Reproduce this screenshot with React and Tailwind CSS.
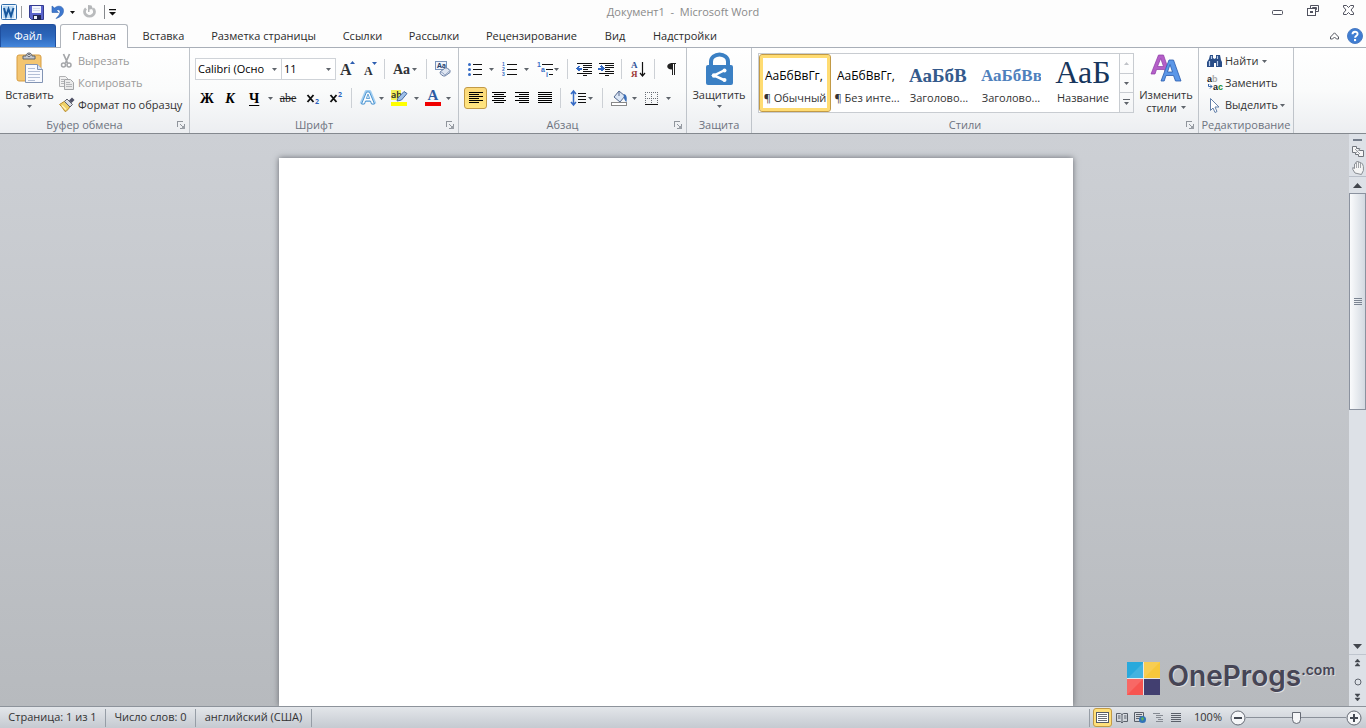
import React, { useState } from "react";
import clsx from "clsx";

const tabs = [
  { name: "Вставка", width: "w-[71px]" },
  { name: "Разметка страницы", width: "w-[129px]" },
  { name: "Ссылки", width: "w-[69px]" },
  { name: "Рассылки", width: "w-[74px]" },
  { name: "Рецензирование", width: "w-[121px]" },
  { name: "Вид", width: "w-[46px]" },
  { name: "Надстройки", width: "w-[94px]" },
];

const styles = [
  { name: "¶ Обычный", sample: "АаБбВвГг,", look: "font-['Open_Sans',sans-serif] text-[12px] text-black" },
  { name: "¶ Без инте...", sample: "АаБбВвГг,", look: "font-['Open_Sans',sans-serif] text-[12px] text-black" },
  { name: "Заголово...", sample: "АаБбВ", look: "font-['Liberation_Serif',serif] text-[19px] font-bold text-[#345a8c]" },
  { name: "Заголово...", sample: "АаБбВв", look: "font-['Liberation_Serif',serif] text-[17px] font-bold text-[#4f81bd]" },
  { name: "Название", sample: "АаБ", look: "font-['Liberation_Serif',serif] text-[32px] text-[#17365d]" },
];

function Arrow({ className = "" }) {
  return (
    <svg width="5" height="3" viewBox="0 0 5 3" className={clsx("shrink-0", className)} aria-hidden="true">
      <path d="M0 0h5L2.500 3z" fill="#5f646b" />
    </svg>
  );
}

function Icon({ w = 16, h = 16, crisp, children }) {
  return (
    <svg
      width={w}
      height={h}
      viewBox={`0 0 ${w} ${h}`}
      fill="none"
      className="shrink-0 overflow-visible"
      shapeRendering={crisp ? "crispEdges" : "auto"}
      aria-hidden="true"
    >
      {children}
    </svg>
  );
}

function Tool({ label, className = "", children }) {
  return (
    <button type="button" aria-label={label} className={clsx("flex h-6 shrink-0 items-center justify-center", className)}>
      {children}
    </button>
  );
}

function DropTool({ label, className = "", children }) {
  return (
    <button type="button" aria-label={label} className={clsx("flex h-6 shrink-0 items-center justify-between", className)}>
      {children}
      <Arrow />
    </button>
  );
}

function Divider({ className = "" }) {
  return <span className={clsx("h-5 w-px shrink-0 bg-[#ccd0d5]", className)} />;
}

function Group({ title, launcher, className = "", children }) {
  return (
    <section className={clsx("flex shrink-0 flex-col border-r border-[#bfc4ca]", className)}>
      <div className="flex-1">{children}</div>
      <div className="flex h-4 items-center">
        <h2 className="flex-1 text-center whitespace-nowrap text-[#6d7380]">{title}</h2>
        {launcher && (
          <button type="button" aria-label={`${title}: параметры`} className="flex w-5 justify-end pr-1">
            <Icon w={8} h={8} crisp>
              <path d="M0.500 6V0.500H6" stroke="#90959c" />
              <path d="M3 3l3 3" stroke="#90959c" />
              <path d="M7.500 3v4.500H3" stroke="#90959c" />
              <rect x="5" y="5" width="3" height="3" fill="#9a9fa6" />
            </Icon>
          </button>
        )}
      </div>
    </section>
  );
}

function Combo({ label, options, value, onChange, className = "" }) {
  return (
    <label className={clsx("relative flex h-[22px] items-center border border-[#cfd3d8] bg-white", className)}>
      <select
        aria-label={label}
        value={value}
        onChange={(event) => onChange(event.target.value)}
        className="h-full w-full appearance-none overflow-hidden bg-transparent pr-3 pl-0.5 text-[11px] text-black outline-none"
      >
        {options.map((option) => (
          <option key={option}>{option}</option>
        ))}
      </select>
      <Arrow className="pointer-events-none absolute right-1" />
    </label>
  );
}

function Lines({ rows }) {
  return (
    <Icon w={14} h={12} crisp>
      {rows.map(([x, width], i) => (
        <rect key={i} x={x} y={i * 2} width={width} height="1" fill="#000" />
      ))}
    </Icon>
  );
}

const alignments = [
  { label: "По левому краю", rows: [[0, 14], [0, 10], [0, 14], [0, 10], [0, 14], [0, 10]] },
  { label: "По центру", rows: [[0, 14], [2, 10], [0, 14], [2, 10], [0, 14], [2, 10]] },
  { label: "По правому краю", rows: [[0, 14], [4, 10], [0, 14], [4, 10], [0, 14], [4, 10]] },
  { label: "По ширине", rows: [[0, 14], [0, 14], [0, 14], [0, 14], [0, 14], [0, 14]] },
];

function TitleBar() {
  return (
    <header className="grid h-6 grid-cols-[1fr_auto_1fr] items-center">
      <div className="flex items-center">
        <button type="button" aria-label="Word" className="ml-px">
          <Icon>
            <rect x="0.500" y="0.500" width="15" height="15" rx="1" fill="#eef6fd" stroke="#2f6cab" />
            <rect x="2" y="2" width="11" height="12" fill="#b9d8f2" />
            <path d="M3 4l2 8 2.500-7L10 12l2.500-8" stroke="#17579d" strokeWidth="2" />
          </Icon>
        </button>
        <span className="ml-1 h-3 w-px bg-[#9b9da0]" />
        <button type="button" aria-label="Сохранить" className="ml-[7px]">
          <Icon w={15} h={15}>
            <path d="M0.500 0.500h14v14h-12l-2-2z" fill="#5a64cb" stroke="#343b8f" />
            <rect x="3" y="1" width="9" height="7" fill="#f4f6fd" />
            <path d="M4 3.500h7M4 5.500h7" stroke="#d5daea" />
            <rect x="4" y="10" width="8" height="5" fill="#20264f" />
            <rect x="5" y="11" width="3" height="3" fill="#eef1fb" />
          </Icon>
        </button>
        <button type="button" aria-label="Отменить" className="ml-2 flex items-center gap-1.5">
          <Icon w={12} h={14}>
            <path d="M0 1v6.500h6.500L4.500 5.500C6.500 4 8.500 5 8 7.500 7.500 10 6 11.500 4 13.500c5-1.500 7.500-4 7.500-8C11.500 1.500 6.500-.5 2.500 3z" fill="#3e78cf" stroke="#2c5fae" strokeWidth=".6" />
          </Icon>
          <svg width="5" height="3" viewBox="0 0 5 3" aria-hidden="true">
            <path d="M0 0h5L2.500 3z" fill="#111" />
          </svg>
        </button>
        <button type="button" aria-label="Повторить" className="ml-2">
          <Icon w={13} h={14}>
            <path d="M3 3.500a5 4.500 0 1 0 7 0" stroke="#b9bbbd" strokeWidth="2.800" />
            <path d="M5 0v7h1.500V4.500L10 4 8.500.500z" fill="#b4b6b8" />
          </Icon>
        </button>
        <span className="ml-2 h-3.5 w-px bg-[#85888c]" />
        <button type="button" aria-label="Настройка панели" className="ml-1">
          <Icon w={7} h={7}>
            <path d="M0 0h7v1.300H0zM0 3h7L3.500 6.500z" fill="#111" />
          </Icon>
        </button>
      </div>
      <h1 className="text-[11px] whitespace-pre text-[#8a8a8a]">Документ1  -  Microsoft Word</h1>
      <div className="flex items-center justify-end gap-6 pr-3">
        <button type="button" aria-label="Свернуть">
          <Icon w={11} h={5}>
            <rect x="0.500" y="0.500" width="10" height="4" rx="1" fill="#fff" stroke="#50525f" />
          </Icon>
        </button>
        <button type="button" aria-label="Свернуть в окно" className="pb-1">
          <Icon w={12} h={11}>
            <path d="M3.500 3V.5h8v6H9" stroke="#50525f" />
            <path d="M5.500 3.500v-1h4v2H9" stroke="#50525f" />
            <rect x="0.500" y="3.500" width="8" height="7" stroke="#50525f" fill="#fff" />
            <rect x="3.500" y="6.500" width="2" height="1" stroke="#50525f" />
          </Icon>
        </button>
        <button type="button" aria-label="Закрыть" className="pb-1">
          <Icon w={11} h={10}>
            <path d="M.5.500h3l2 2 2-2h3v1.500L8 5l2.500 3v1.500h-3l-2-2-2 2h-3V8L3 5 .5 2z" fill="#fff" stroke="#50525f" />
          </Icon>
        </button>
      </div>
    </header>
  );
}

function TabRow() {
  return (
    <nav className="flex h-6 items-stretch border-b border-[#a9afb8] text-[#2b2b2b]">
      <button type="button" className="w-14 rounded-t-[3px] border border-b-0 border-[#1f4f9f] bg-linear-to-b from-[#2558a8] via-[#2c66ba] to-[#4386dc] text-white">
        Файл
      </button>
      <button type="button" className="z-10 -mb-px ml-1 w-[68px] rounded-t-[3px] border border-b-0 border-[#b0b5bc] bg-white">
        Главная
      </button>
      <div className="flex flex-1 pt-px">
        {tabs.map((tab) => (
          <button key={tab.name} type="button" className={clsx("shrink-0 whitespace-nowrap", tab.width)}>
            {tab.name}
          </button>
        ))}
      </div>
      <div className="flex items-center gap-2 pr-[3px]">
        <button type="button" aria-label="Свернуть ленту">
          <Icon w={9} h={8}>
            <path d="M.5 5L4.500.800 8.500 5v2H6.500l-2-2-2 2H.5z" fill="#fff" stroke="#555861" />
          </Icon>
        </button>
        <button type="button" aria-label="Справка">
          <Icon>
            <circle cx="8" cy="8" r="7.500" fill="#3f7dd2" stroke="#4b7cc4" />
            <path d="M5.500 6.200C5.500 3 10.600 3 10.600 6c0 1.700-2.500 1.700-2.500 3.700" stroke="#fff" strokeWidth="1.900" />
            <rect x="7" y="11" width="2.100" height="2.100" fill="#fff" />
          </Icon>
        </button>
      </div>
    </nav>
  );
}

function ClipboardGroup() {
  return (
    <Group title="Буфер обмена" launcher className="w-[190px]">
      <div className="flex">
        <button type="button" className="flex w-[59px] flex-col items-center pt-1">
          <Icon w={28} h={32}>
            <rect x="1" y="3" width="24" height="26" rx="2" fill="#f3c571" stroke="#d79d42" />
            <path d="M7 7V4h3c0-4 6-4 6 0h3v3z" fill="#c5c9d0" stroke="#5f646d" />
            <circle cx="13" cy="3.500" r="1.200" fill="#fff" stroke="#5f646d" />
            <path d="M9.500 12.500h12l5 5v13h-17z" fill="#f8faff" stroke="#8294b4" />
            <path d="M21.500 12.500v5h5" fill="#dbe5f6" stroke="#8294b4" />
            <path d="M12 16.500h7M12 19.500h12M12 22.500h12M12 25.500h12M12 28.500h7" stroke="#b3bfd6" />
          </Icon>
          <span className="mt-[3px] leading-4">Вставить</span>
          <Arrow className="mt-0.5" />
        </button>
        <div className="flex flex-col items-start pt-0.5 leading-[22px] whitespace-nowrap">
          <button type="button" className="flex items-center gap-[3px] text-[#9a9a9a]">
            <Icon>
              <path d="M4.500 1l4 9M10.500 1l-4 9" stroke="#a4a6a9" strokeWidth="1.700" />
              <circle cx="4.500" cy="12" r="2" stroke="#a4a6a9" strokeWidth="1.500" />
              <circle cx="10" cy="12" r="2" stroke="#a4a6a9" strokeWidth="1.500" />
            </Icon>
            Вырезать
          </button>
          <button type="button" className="flex items-center gap-[3px] text-[#9a9a9a]">
            <Icon>
              <path d="M.5 1.500h6l3 3v7h-9z" fill="#f1f1f1" stroke="#b0b1b3" />
              <path d="M5.500 4.500h6l3 3v7h-9z" fill="#eaeaea" stroke="#a3a5a8" />
              <path d="M2 4.500h3M2 6.500h3M2 8.500h3M7 7.500h4M7 9.500h6M7 11.500h6" stroke="#b4b6b9" />
            </Icon>
            Копировать
          </button>
          <button type="button" className="flex items-center gap-[3px]">
            <Icon>
              <path d="M.5 7.500L6 4l5 5c-1 3-3 5-5 5.500-1.500-2-3-5-5.500-7z" fill="#efd168" stroke="#b88b2b" />
              <path d="M5.500 4.500L8 2l5.500 5.500L11 10z" fill="#d9dce5" stroke="#60636e" />
              <path d="M10 3.500L13 .500l2.500 2.500-3 3z" fill="#4f5165" />
              <path d="M3 8.500l4 4" stroke="#fff4bd" strokeWidth="1.500" />
            </Icon>
            Формат по образцу
          </button>
        </div>
      </div>
    </Group>
  );
}

function FontGroup() {
  const [font, setFont] = useState("Calibri (Осно");
  const [size, setSize] = useState("11");

  return (
    <Group title="Шрифт" launcher className="w-[269px]">
      <div className="flex flex-col gap-[5px] pt-[9px] pl-[5px]">
        <div className="flex h-6 items-center">
          <Combo label="Шрифт" value={font} onChange={setFont} options={["Calibri (Осно", "Arial", "Times"]} className="w-[87px]" />
          <Combo label="Размер" value={size} onChange={setSize} options={["8", "11", "12", "14"]} className="-ml-px w-[55px]" />
          <Tool label="Увеличить размер" className="w-6">
            <Icon w={16} h={16}>
              <text x="0" y="14" fontFamily="Liberation Serif, serif" fontWeight="700" fontSize="16" fill="#2f3236">A</text>
              <path d="M10 3h5l-2.500-3z" fill="#2c5db0" />
            </Icon>
          </Tool>
          <Tool label="Уменьшить размер" className="w-5">
            <Icon w={14} h={16}>
              <text x="1" y="14" fontFamily="Liberation Serif, serif" fontWeight="700" fontSize="12" fill="#2f3236">A</text>
              <path d="M9 1h5l-2.500 3z" fill="#2c5db0" />
            </Icon>
          </Tool>
          <Divider className="mx-1" />
          <DropTool label="Регистр" className="mx-1 w-6">
            <span className="font-['Liberation_Serif',serif] text-[14px] font-bold text-[#2f3236]">Aa</span>
          </DropTool>
          <Divider className="ml-[5px]" />
          <Tool label="Очистить формат" className="ml-1.5 w-[18px]">
            <Icon w={17} h={16}>
              <rect x="1.500" y="0.500" width="11" height="8" fill="#eff4fb" stroke="#7a93bb" />
              <text x="3" y="7" fontFamily="Open Sans, sans-serif" fontWeight="700" fontSize="7" fill="#27406d">Aa</text>
              <path d="M6 11l5-4c1-.7 4 1 5 2.500v2L11 15c-2 .5-5-1.500-5-4z" fill="#dfe6f2" stroke="#697ea3" />
              <path d="M6 11c2 0 4 1.500 5 3.500M11 14l5-4.500" stroke="#94a5c3" />
            </Icon>
          </Tool>
        </div>
        <div className="flex h-6 items-center">
          <Tool label="Полужирный" className="w-6">
            <span className="font-['Liberation_Serif',serif] text-[14px] font-bold text-black">Ж</span>
          </Tool>
          <Tool label="Курсив" className="w-[22px]">
            <span className="font-['Liberation_Serif',serif] text-[14px] font-bold text-black italic">К</span>
          </Tool>
          <DropTool label="Подчеркнутый" className="ml-2 w-6">
            <span className="font-['Liberation_Serif',serif] text-[14px] font-bold text-black underline underline-offset-2">Ч</span>
          </DropTool>
          <Tool label="Зачеркнутый" className="ml-1 w-[22px]">
            <span className="font-['Liberation_Serif',serif] text-[12px] text-[#222] line-through">abe</span>
          </Tool>
          <Tool label="Подстрочный" className="ml-0.5 w-6">
            <Icon w={14} h={14}>
              <path d="M1.500 4l6 7M7.500 4l-6 7" stroke="#111" strokeWidth="1.900" />
              <text x="9" y="13" fontFamily="Open Sans, sans-serif" fontWeight="700" fontSize="7" fill="#2c62bd">2</text>
            </Icon>
          </Tool>
          <Tool label="Надстрочный" className="w-[22px]">
            <Icon w={14} h={14}>
              <path d="M1.500 4l6 7M7.500 4l-6 7" stroke="#111" strokeWidth="1.900" />
              <text x="9" y="6" fontFamily="Open Sans, sans-serif" fontWeight="700" fontSize="7" fill="#2c62bd">2</text>
            </Icon>
          </Tool>
          <Divider className="mx-1" />
          <DropTool label="Текстовые эффекты" className="ml-1 w-6">
            <Icon w={16} h={18}>
              <path d="M1.500 15L6.500 3h3l5 12M4 11h8" stroke="#a3cff2" strokeWidth="4" strokeLinejoin="round" />
              <path d="M1.500 15L6.500 3h3l5 12h-3l-1-3h-5l-1 3z" fill="#fff" stroke="#4b93cf" />
              <path d="M6.300 9.500L8 5l1.700 4.500z" fill="#d5ecfc" stroke="#4b93cf" strokeWidth=".8" />
            </Icon>
          </DropTool>
          <DropTool label="Цвет выделения" className="ml-[7px] w-7">
            <Icon w={17} h={18}>
              <rect x="0" y="1" width="10" height="10" fill="#f2ef59" />
              <text x="0" y="9" fontFamily="Open Sans, sans-serif" fontWeight="600" fontSize="9" fill="#222">ab</text>
              <path d="M7 9l6-6.500 3 2L10.500 11 6 12z" fill="#9fc0e8" stroke="#456ca4" />
              <rect x="0" y="13" width="16" height="4" fill="#ffff00" />
            </Icon>
          </DropTool>
          <DropTool label="Цвет текста" className="ml-1.5 w-[26px]">
            <Icon w={16} h={18}>
              <text x="2.500" y="11" fontFamily="Liberation Serif, serif" fontWeight="700" fontSize="15" fill="#2d5ba3">A</text>
              <rect x="0" y="13" width="16" height="4" fill="#f00000" />
            </Icon>
          </DropTool>
        </div>
      </div>
    </Group>
  );
}

function ParagraphGroup() {
  const [align, setAlign] = useState(0);

  return (
    <Group title="Абзац" launcher className="w-[228px]">
      <div className="flex flex-col gap-[5px] pt-[9px] pl-[5px]">
        <div className="flex h-6 items-center">
          <DropTool label="Маркеры" className="ml-1 w-[26px]">
            <Icon w={15} h={14}>
              <circle cx="1.500" cy="2.500" r="1.500" fill="#356bc5" />
              <circle cx="1.500" cy="7.500" r="1.500" fill="#356bc5" />
              <circle cx="1.500" cy="12.500" r="1.500" fill="#356bc5" />
              <path d="M5 2.500h9M5 7.500h9M5 12.500h9" stroke="#111" />
            </Icon>
          </DropTool>
          <DropTool label="Нумерация" className="ml-2 w-[27px]">
            <Icon w={16} h={14}>
              <g fontFamily="Liberation Sans, sans-serif" fontWeight="700" fontSize="5" fill="#356bc5">
                <text x="0" y="4">1</text>
                <text x="0" y="9">2</text>
                <text x="0" y="14">3</text>
              </g>
              <path d="M5 2.500h10M5 7.500h10M5 12.500h10" stroke="#111" />
            </Icon>
          </DropTool>
          <DropTool label="Многоуровневый список" className="ml-2 w-[22px]">
            <Icon w={17} h={15}>
              <g fontFamily="Liberation Sans, sans-serif" fontWeight="700" fontSize="7" fill="#356bc5">
                <text x="0" y="5">1</text>
                <text x="4" y="10">a</text>
                <text x="9" y="15">i</text>
              </g>
              <path d="M5 2.500h11M9 7.500h7M12 12.500h4" stroke="#111" />
            </Icon>
          </DropTool>
          <Divider className="mr-[5px] ml-2" />
          <Tool label="Уменьшить отступ" className="w-[22px]">
            <Icon w={16} h={14} crisp>
              <path d="M1 1.500h15M7 3.500h9M7 5.500h9M7 7.500h5M7 9.500h9M1 11.500h15M7 13.500h4" stroke="#111" />
              <path d="M6 6.500H1M3.500 4L1 6.500 3.500 9" stroke="#356bc5" strokeWidth="2" />
            </Icon>
          </Tool>
          <Tool label="Увеличить отступ" className="w-[22px]">
            <Icon w={16} h={14} crisp>
              <path d="M1 1.500h15M7 3.500h9M7 5.500h9M7 7.500h5M7 9.500h9M1 11.500h15M7 13.500h4" stroke="#111" />
              <path d="M0 6.500h5M3 4l2.500 2.500L3 9" stroke="#356bc5" strokeWidth="2" />
            </Icon>
          </Tool>
          <Divider className="mx-1" />
          <Tool label="Сортировка" className="w-6">
            <Icon w={15} h={17}>
              <g fontFamily="Liberation Serif, serif" fontWeight="700" fontSize="9">
                <text x="0" y="7" fill="#2d5298">А</text>
                <text x="0" y="16" fill="#9c3636">Я</text>
              </g>
              <path d="M11.500 1v13M9 12l2.500 3 2.500-3" stroke="#111" strokeWidth="1.200" />
            </Icon>
          </Tool>
          <Divider className="mx-1" />
          <Tool label="Отобразить все знаки" className="w-6">
            <Icon w={10} h={12}>
              <path d="M5 .5h5M6.500.5v11.500M8.500.5v11.500" stroke="#222" />
              <path d="M6.500 0v6.500C-.5 7-.5 0 6.500 0z" fill="#222" />
            </Icon>
          </Tool>
        </div>
        <div className="flex h-6 items-center">
          {alignments.map((item, index) => (
            <button
              key={item.label}
              type="button"
              aria-label={item.label}
              aria-pressed={align === index}
              onClick={() => setAlign(index)}
              className={clsx(
                "flex h-[22px] w-[23px] shrink-0 items-center justify-center rounded-[3px] border",
                align === index ? "border-[#c29a46] bg-linear-to-b from-[#fbd97a] to-[#ffe57f]" : "border-transparent",
              )}
            >
              <Lines rows={item.rows} />
            </button>
          ))}
          <Divider className="mx-1" />
          <DropTool label="Интервал" className="ml-[5px] w-[23px]">
            <Icon w={16} h={16}>
              <path d="M3.500 1v14M1 4l2.500-3L6 4M1 12l2.500 3L6 12" stroke="#356bc5" strokeWidth="1.500" />
              <path d="M8 3.500h8M8 6.500h8M8 9.500h8M8 12.500h8" stroke="#111" />
            </Icon>
          </DropTool>
          <Divider className="ml-[9px]" />
          <DropTool label="Заливка" className="ml-2 w-[26px]">
            <Icon w={17} h={16}>
              <path d="M3 7l5-6 6 5-5 6z" fill="#dbe6f5" stroke="#54698f" />
              <path d="M8 6V1" stroke="#54698f" />
              <path d="M13 4c3 1 3 4 2.500 8-1.500-1-3.500-4-2.500-8z" fill="#3c6fb9" />
              <rect x="0.500" y="12.500" width="15" height="3" fill="#fff" stroke="#888" />
            </Icon>
          </DropTool>
          <DropTool label="Границы" className="ml-2 w-[26px]">
            <Icon w={13} h={13} crisp>
              <path d="M0 .5h13M0 6.500h13M.5 0v12M6.500 0v12M12.500 0v12" stroke="#6a6f76" strokeDasharray="1 1" />
              <path d="M0 12.500h13" stroke="#111" />
            </Icon>
          </DropTool>
        </div>
      </div>
    </Group>
  );
}

function ProtectGroup() {
  return (
    <Group title="Защита" className="w-[65px]">
      <button type="button" className="flex w-full flex-col items-center pt-[5px]">
        <Icon w={27} h={32}>
          <path d="M5 14V8.500a8.500 7 0 0 1 17 0V14" stroke="#3b80c4" strokeWidth="4" />
          <rect x="0" y="12" width="27" height="20" rx="2" fill="#3b80c4" />
          <path d="M19 17L8 22.500l11 5" stroke="#fff" strokeWidth="2.500" />
          <circle cx="18.500" cy="17.500" r="2" fill="#fff" />
          <circle cx="8" cy="22.500" r="2.200" fill="#fff" />
          <circle cx="18.500" cy="27" r="2" fill="#fff" />
        </Icon>
        <span className="mt-0.5 leading-4">Защитить</span>
        <Arrow className="mt-0.5" />
      </button>
    </Group>
  );
}

function StylesGroup() {
  const [selected, setSelected] = useState(0);

  return (
    <Group title="Стили" launcher className="w-[447px]">
      <div className="flex pt-[5px] pl-1.5">
        <div className="flex h-[60px] border border-[#c8ccd1] bg-white">
          {styles.map((style, index) => (
            <button
              key={index}
              type="button"
              onClick={() => setSelected(index)}
              className={clsx(
                "flex w-[72px] shrink-0 flex-col items-center rounded-[3px] border pt-px",
                selected === index ? "border-[#c29a46] inset-ring-3 inset-ring-[#ffdc72]" : "border-transparent",
              )}
            >
              <span
                className={clsx(
                  "flex h-8 w-[60px] items-center overflow-hidden whitespace-nowrap",
                  index === 4 ? "justify-center" : "pt-2",
                  style.look,
                )}
              >
                {style.sample}
              </span>
              <span className="mt-0.5 leading-4 whitespace-nowrap">{style.name}</span>
            </button>
          ))}
        </div>
        <div className="-ml-px flex h-[60px] w-[15px] flex-col divide-y divide-[#c8ccd1] border border-[#c8ccd1]">
          <button type="button" aria-label="Вверх" className="flex flex-1 items-center justify-center">
            <Icon w={5} h={3}>
              <path d="M0 3h5L2.500 0z" fill="#c0c3c8" />
            </Icon>
          </button>
          <button type="button" aria-label="Вниз" className="flex flex-1 items-center justify-center">
            <Arrow />
          </button>
          <button type="button" aria-label="Все стили" className="flex flex-1 items-center justify-center">
            <Icon w={7} h={7}>
              <path d="M0 0h7v1H0zM1 3h5L3.500 6z" fill="#5f646b" />
            </Icon>
          </button>
        </div>
        <button type="button" className="flex flex-1 flex-col items-center leading-[13px]">
          <Icon w={30} h={32}>
            <path d="M0 21L7.500 2h5L19 21h-4l-1.500-4.500h-8L4 21zM6.500 13.500h6L9.700 5.500z" fill="#b45fc8" stroke="#8d3ba5" strokeWidth=".7" fillRule="evenodd" />
            <path d="M10 28.500L18 7h6l7 21.500z" fill="#fbfcfd" />
            <path d="M10 28L18 7h4.500L30 28h-5.500L22.500 22.500h-7.500L13.200 28zM16.500 19h5L19 11.500z" fill="#5b97e8" stroke="#2a5cac" strokeWidth=".8" fillRule="evenodd" />
          </Icon>
          <span className="mt-[3px]">Изменить</span>
          <span className="flex items-center gap-1">
            стили <Arrow />
          </span>
        </button>
      </div>
    </Group>
  );
}

function EditingGroup() {
  return (
    <Group title="Редактирование" className="w-[95px]">
      <div className="flex flex-col items-start pt-0.5 pl-2 leading-[22px] whitespace-nowrap">
        <button type="button" className="flex items-center gap-0.5">
          <Icon>
            <path d="M3 2h3v3l1.500 1L9 5V2h4l1 5 1 2v5h-6v-4H7v4H0V9l2-3z" fill="#294d87" />
            <path d="M2.500 8v5M10.500 8v5M4.500 3v3M10.500 3v3" stroke="#b8cceb" strokeWidth="1.200" />
          </Icon>
          Найти <Arrow className="ml-0.5" />
        </button>
        <button type="button" className="flex items-center gap-0.5">
          <Icon>
            <g fontFamily="Liberation Sans, sans-serif" fontWeight="700" fontSize="9">
              <text x="0" y="7" fill="#222">
                a<tspan fill="#aaa">b</tspan>
              </text>
              <text x="6" y="15" fill="#222">
                a<tspan fill="#188b2f">c</tspan>
              </text>
            </g>
            <path d="M1.500 9v2.500H5M3 9.500l2 2-2 2" stroke="#3a69ae" />
          </Icon>
          Заменить
        </button>
        <button type="button" className="flex items-center gap-0.5">
          <Icon>
            <path d="M3.500 1.500v12L6 11l2 4.500 2-1L8 10h4z" fill="#fff" stroke="#6481aa" />
          </Icon>
          Выделить <Arrow />
        </button>
      </div>
    </Group>
  );
}

function ScrollColumn() {
  return (
    <aside className="flex w-[17px] shrink-0 flex-col items-center bg-[#dde1e7] pt-[3px]">
      <span className="mt-0.5 h-0.5 w-[9px] bg-[#747d8b]" />
      <button type="button" aria-label="Линейка" className="mt-1">
        <Icon w={12} h={13}>
          <path d="M.5 1.500h4v2h3v2h4v6h-5v-2h-3v-2h-3z" fill="#f6f6f6" stroke="#70757d" />
          <path d="M3 4l5 5M8 3.500L4 8" stroke="#999ea6" />
        </Icon>
      </button>
      <button type="button" aria-label="Рука" className="mt-[3px]">
        <Icon w={12} h={13}>
          <path d="M3 12L.8 8.500V6.500l1.700 1V3l1.500-1V1l2-.500 2 1 1.500.5 1 1 .9 2.500v4l-2 4z" fill="#f5f5f5" stroke="#8a8e94" />
          <path d="M4.500 2v5M6.500 1v6M8.500 2v5" stroke="#8a8e94" strokeWidth=".8" />
        </Icon>
      </button>
      <span className="mt-0.5 h-px w-full bg-[#b9bfc9]" />
      <button type="button" aria-label="Прокрутить вверх" className="flex h-4 items-center">
        <Icon w={9} h={5}>
          <path d="M0 5h9L4.500 0z" fill="#42464d" />
        </Icon>
      </button>
      <div className="flex min-h-0 w-full flex-1 flex-col">
        <div className="flex flex-[216] items-center justify-center border border-[#8b929f] bg-linear-to-r from-[#fafbfc] to-[#d3d9e1]">
          <Icon w={8} h={8} crisp>
            <path d="M0 .5h8M0 2.500h8M0 4.500h8M0 6.500h8" stroke="#7b8492" />
          </Icon>
        </div>
        <div className="flex-[229]" />
      </div>
      <button type="button" aria-label="Прокрутить вниз" className="flex h-4 items-center">
        <Icon w={9} h={5}>
          <path d="M0 0h9L4.500 5z" fill="#42464d" />
        </Icon>
      </button>
      <div className="flex w-full flex-col items-center border-t border-[#bfc5ce] py-[3px]">
        <button type="button" aria-label="Предыдущая страница" className="flex h-[15px]">
          <Icon w={7} h={9}>
            <path d="M1 4L3.500 1 6 4zM1 8L3.500 5 6 8z" fill="#42464d" stroke="#42464d" strokeWidth=".5" />
          </Icon>
        </button>
        <button type="button" aria-label="Выбор объекта перехода" className="flex h-[18px] items-center">
          <Icon w={8} h={8}>
            <circle cx="4" cy="4" r="3" stroke="#60656e" />
          </Icon>
        </button>
        <button type="button" aria-label="Следующая страница" className="flex h-3 items-center">
          <Icon w={7} h={9}>
            <path d="M1 1h5L3.500 4zM1 5h5L3.500 8z" fill="#42464d" stroke="#42464d" strokeWidth=".5" />
          </Icon>
        </button>
      </div>
    </aside>
  );
}

function Watermark() {
  return (
    <div className="absolute right-3.5 bottom-2.5 flex items-center gap-2 text-[#464555]">
      <Icon w={33} h={33}>
        <rect width="16" height="16" fill="#29a9dc" />
        <rect x="17" width="16" height="16" fill="#f7c73b" />
        <rect y="17" width="16" height="16" fill="#f75450" />
        <rect x="17" y="17" width="16" height="16" fill="#423f70" />
        <path d="M33 0L0 33V17l17-17z" fill="#fff" opacity=".12" />
        <path d="M16.500 0v33M0 16.500h33" stroke="#fff" strokeOpacity=".6" />
      </Icon>
      <p className="flex pb-1 font-['Inter',sans-serif] leading-8 [text-shadow:1px_1px_0_#dcdddf]">
        <span className="text-[28px] font-semibold">OneProgs</span>
        <span className="text-[14px] leading-5 font-semibold">.com</span>
      </p>
    </div>
  );
}

const views = [
  { label: "Чтение", icon: <path d="M.5 2.500h4l1.500 1 1.500-1h4v8h-4L6 12l-1.500-1.500h-4zM6 3v8M2 5h2.500M2 7h2.500M8 5h2.500M8 7h2.500" stroke="#5b606a" /> },
  {
    label: "Веб-документ",
    icon: (
      <>
        <path d="M.5 1.500h9v9h-9zM2 3.500h6M2 5.500h6M2 7.500h4" stroke="#5b606a" />
        <circle cx="8.500" cy="8.500" r="3.500" fill="#3273b8" />
        <path d="M7 7l2-1 1 2-2 2z" fill="#61b357" />
      </>
    ),
  },
  { label: "Структура", icon: <path d="M1 2.500h7M4 4.500h7M4 6.500h5M6 8.500h5M4 10.500h7" stroke="#858a92" /> },
  { label: "Черновик", icon: <path d="M1 2.500h10M1 4.500h10M1 6.500h10M1 8.500h10M1 10.500h10" stroke="#5b606a" /> },
];

function StatusBar() {
  const [zoom, setZoom] = useState(100);

  return (
    <footer className="flex h-[22px] shrink-0 items-center justify-between border-t border-[#8d939b] bg-linear-to-b from-[#e3e6ea] to-[#c5cad1] text-[#333]">
      <div className="flex h-full items-center">
        <button type="button" className="h-[18px] w-[106px] border-r border-[#969da6]">Страница: 1 из 1</button>
        <button type="button" className="h-[18px] w-[90px] border-r border-[#969da6]">Число слов: 0</button>
        <button type="button" className="h-[18px] w-[116px] border-r border-[#969da6]">английский (США)</button>
      </div>
      <div className="flex h-full items-center pr-1">
        <span className="h-[18px] w-px bg-[#969da6]" />
        <button type="button" aria-label="Разметка страницы" className="ml-[3px] flex h-[19px] w-[19px] items-center justify-center rounded-[3px] border border-[#c29a46] bg-[#ffe07a]">
          <Icon w={13} h={11} crisp>
            <rect x="0.500" y="0.500" width="12" height="10" fill="#fff" stroke="#555a64" />
            <path d="M2 2.500h9M2 4.500h9M2 6.500h9M2 8.500h9" stroke="#6b7079" />
          </Icon>
        </button>
        <div className="ml-1 flex gap-1.5">
          {views.map((view) => (
            <button key={view.label} type="button" aria-label={view.label}>
              <Icon w={12} h={13}>{view.icon}</Icon>
            </button>
          ))}
        </div>
        <button type="button" className="ml-3 w-7">{zoom}%</button>
        <button type="button" aria-label="Уменьшить" onClick={() => setZoom(Math.max(10, zoom - 10))} className="ml-2">
          <Icon>
            <circle cx="8" cy="8" r="7" fill="#f5f6f8" stroke="#656a74" />
            <path d="M4 8h8" stroke="#454a53" strokeWidth="2" />
          </Icon>
        </button>
        <input
          type="range"
          min="10"
          max="190"
          value={zoom}
          onChange={(event) => setZoom(Number(event.target.value))}
          aria-label="Масштаб"
          className="h-4 w-[100px] appearance-none bg-[linear-gradient(#8a9099,#8a9099)] bg-size-[100%_1px] bg-center bg-no-repeat [&::-webkit-slider-thumb]:h-3 [&::-webkit-slider-thumb]:w-[9px] [&::-webkit-slider-thumb]:appearance-none [&::-webkit-slider-thumb]:rounded-b-[5px] [&::-webkit-slider-thumb]:border [&::-webkit-slider-thumb]:border-[#656a74] [&::-webkit-slider-thumb]:bg-[#f5f6f8]"
        />
        <button type="button" aria-label="Увеличить" onClick={() => setZoom(Math.min(190, zoom + 10))}>
          <Icon>
            <circle cx="8" cy="8" r="7" fill="#f5f6f8" stroke="#656a74" />
            <path d="M4 8h8M8 4v8" stroke="#454a53" strokeWidth="2" />
          </Icon>
        </button>
      </div>
    </footer>
  );
}

function App() {
  return (
    <div className="flex h-screen flex-col overflow-hidden bg-[#fdfdfd] font-['Open_Sans','Noto_Sans',sans-serif] text-[11px] text-[#333]">
      <TitleBar />
      <TabRow />
      <div className="flex h-[86px] shrink-0 border-b border-[#84898f] bg-linear-to-b from-white via-[#fafbfb] to-[#eceef1]">
        <ClipboardGroup />
        <FontGroup />
        <ParagraphGroup />
        <ProtectGroup />
        <StylesGroup />
        <EditingGroup />
      </div>
      <div className="flex min-h-0 flex-1 bg-linear-to-b from-[#cdd0d5] to-[#b7babe]">
        <main className="relative flex flex-1 justify-center overflow-hidden pt-6 pl-[3px]">
          <article className="w-[794px] bg-white shadow-[0_0_6px_#666a70]" />
          <Watermark />
        </main>
        <ScrollColumn />
      </div>
      <StatusBar />
    </div>
  );
}

export default App;
